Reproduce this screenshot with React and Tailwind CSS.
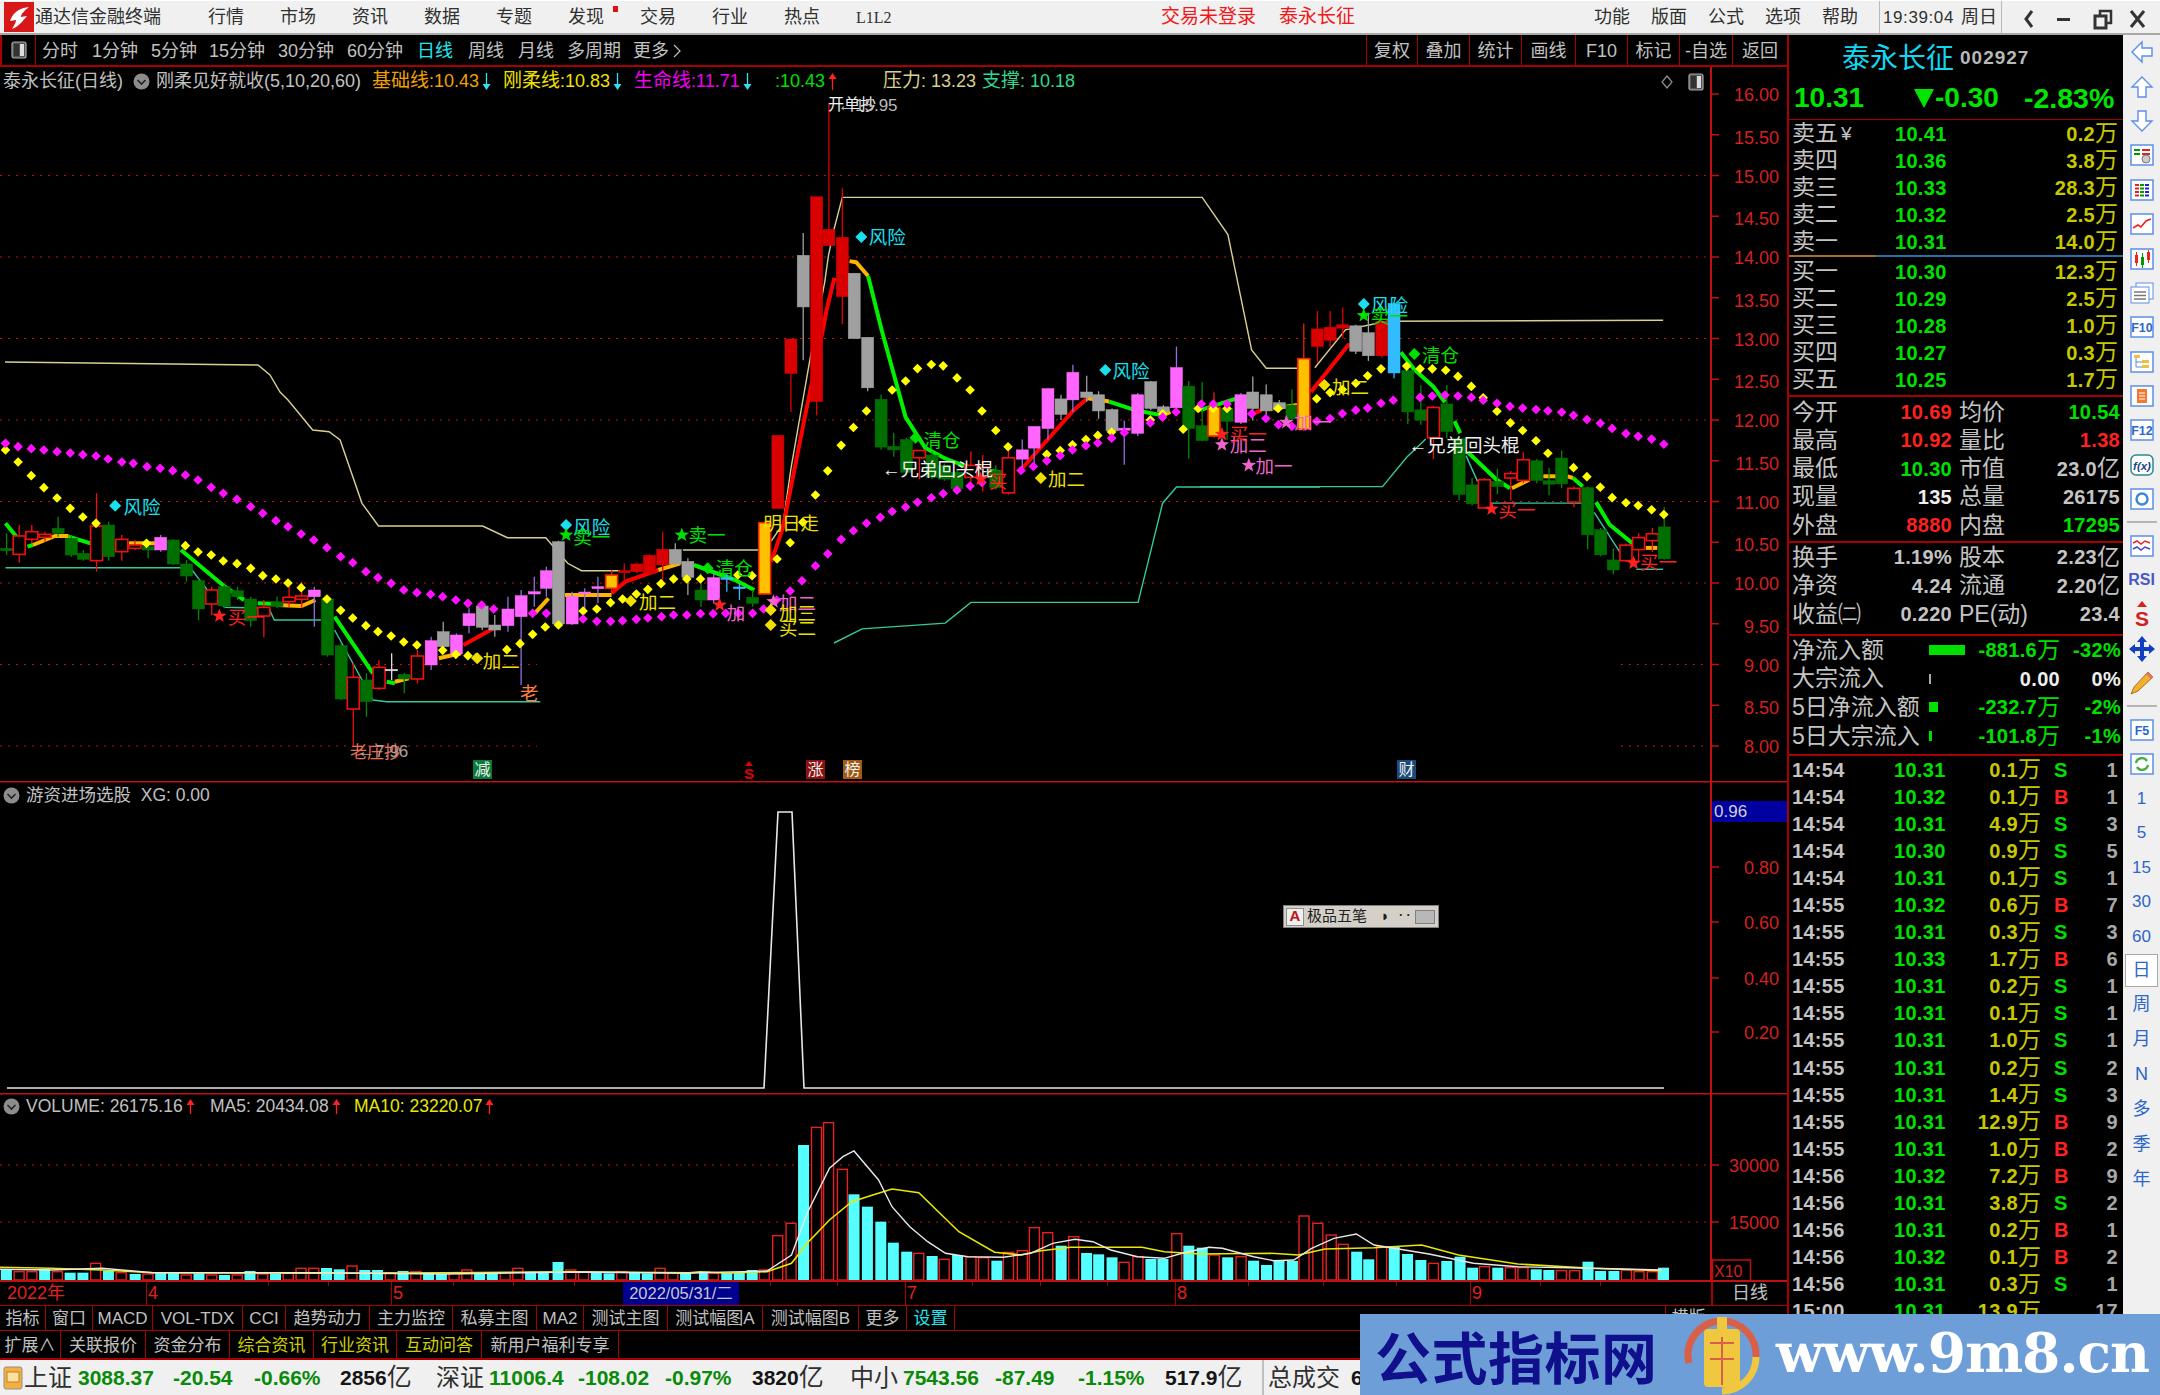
import React from "react";

const z7 = (x, y) => [x / 1.823, 400 + y / 3];
const z8 = (x, y) => [700 + x / 2.529, 90 + y / 2.904];
const z9 = (x, y) => [1200 + x / 2.613, 280 + y / 2.904];
const pts = (f, a) => a.map(([x, y]) => f(x, y));
const P = (arr) => arr.map((p) => p[0].toFixed(1) + "," + p[1].toFixed(1)).join(" ");

const c7 = [
  [12, 445, 452, 400, 465, "g"], [35, 408, 463, 375, 488, "r"], [58, 395, 418, 375, 430, "r"], [82, 403, 412, 395, 425, "r"],
  [106, 385, 400, 350, 410, "g"], [130, 415, 465, 405, 470, "g"], [152, 460, 478, 450, 482, "g"], [176, 378, 482, 280, 515, "r"],
  [198, 375, 470, 365, 482, "g"], [222, 418, 455, 405, 482, "r"], [246, 435, 445, 420, 450, "r"], [270, 440, 450, 420, 475, "g"],
  [293, 412, 450, 405, 455, "p"], [316, 420, 492, 418, 495, "g"], [340, 492, 528, 480, 545, "g"], [362, 542, 627, 535, 660, "g"],
  [386, 570, 612, 560, 645, "r"], [409, 560, 618, 555, 625, "g"], [433, 572, 590, 560, 600, "g"], [457, 597, 662, 590, 680, "g"],
  [481, 622, 648, 600, 712, "r"], [505, 605, 620, 590, 625, "g"], [527, 592, 605, 545, 620, "r"], [550, 588, 598, 545, 625, "r"],
  [573, 570, 590, 560, 680, "p"], [597, 597, 765, 590, 770, "g"], [622, 737, 897, 730, 900, "g"], [644, 832, 927, 790, 1040, "r"],
  [668, 840, 905, 820, 950, "g"], [691, 802, 865, 780, 870, "r"], [714, 808, 811, 760, 840, "w"], [737, 823, 837, 820, 880, "g"],
  [761, 768, 837, 750, 850, "r"], [786, 722, 795, 710, 810, "p"], [808, 695, 740, 665, 750, "a"], [832, 705, 762, 700, 770, "p"],
  [855, 641, 677, 625, 700, "p"], [879, 618, 682, 605, 690, "a"], [902, 675, 690, 645, 710, "a"], [926, 627, 677, 590, 695, "p"],
  [950, 587, 650, 570, 855, "p"], [974, 575, 582, 530, 620, "p"], [996, 512, 565, 500, 590, "p"], [1018, 425, 672, 422, 675, "a"],
  [1043, 590, 672, 575, 675, "p"], [1066, 576, 580, 565, 640, "p"], [1090, 560, 566, 530, 610, "p"], [1115, 525, 565, 510, 575, "o"],
  [1138, 512, 518, 490, 545, "R"], [1161, 492, 515, 488, 520, "R"], [1184, 466, 520, 462, 525, "R"], [1208, 448, 495, 395, 550, "R"],
  [1231, 448, 492, 430, 495, "a"], [1254, 484, 532, 475, 585, "a"], [1278, 570, 600, 520, 620, "g"], [1301, 533, 600, 520, 610, "p"],
  [1325, 533, 538, 520, 575, "c"], [1348, 561, 566, 550, 600, "c"], [1372, 592, 610, 570, 620, "g"], [1394, 368, 582, 365, 585, "o"],
].map(([x, t, b, wt, wb, k]) => ({ x: x / 1.823, t: 400 + t / 3, b: 400 + b / 3, wt: 400 + wt / 3, wb: 400 + wb / 3, k }));

const c8 = [
  [197, 1003, 1215, 1003, 1215, "R"], [230, 723, 823, 723, 935, "R"], [261, 480, 630, 415, 785, "a"], [295, 310, 905, 310, 945, "R"],
  [326, 405, 452, 40, 452, "R"], [360, 428, 600, 285, 680, "R"], [390, 532, 722, 532, 722, "a"], [424, 718, 865, 718, 875, "a"],
  [458, 898, 1037, 885, 1045, "g"], [490, 1035, 1045, 995, 1065, "g"], [522, 1015, 1110, 1010, 1115, "g"], [555, 1047, 1068, 1047, 1130, "r"],
  [587, 1060, 1125, 1050, 1130, "g"], [618, 1090, 1130, 1085, 1135, "g"], [650, 1110, 1158, 1100, 1160, "g"], [685, 1090, 1125, 1050, 1165, "r"],
  [715, 1095, 1125, 1060, 1165, "r"], [748, 1105, 1155, 1090, 1160, "g"], [780, 1068, 1170, 1045, 1175, "r"], [815, 1045, 1072, 1015, 1100, "p"],
  [845, 977, 1040, 977, 1085, "p"], [880, 867, 983, 867, 1015, "p"], [913, 897, 942, 885, 958, "a"], [943, 820, 900, 798, 935, "p"],
  [978, 877, 893, 830, 905, "a"], [1008, 885, 932, 875, 955, "a"], [1042, 928, 990, 925, 1000, "a"], [1073, 982, 988, 960, 1088, "p"],
  [1107, 885, 997, 880, 1005, "p"], [1140, 847, 925, 845, 930, "a"], [1172, 920, 935, 915, 950, "a"], [1205, 806, 923, 745, 935, "p"],
  [1236, 860, 983, 845, 1070, "g"], [1270, 975, 1018, 848, 1020, "g"], [1300, 922, 1005, 878, 1010, "o"], [1333, 925, 962, 920, 1015, "g"],
  [1368, 885, 965, 880, 970, "p"], [1398, 877, 925, 832, 960, "a"], [1432, 885, 932, 855, 950, "a"], [1465, 908, 925, 900, 935, "a"],
  [1497, 915, 955, 870, 960, "g"], [1527, 780, 985, 678, 990, "o"],
].map(([x, t, b, wt, wb, k]) => ({ x: 700 + x / 2.529, t: 90 + t / 2.904, b: 90 + b / 2.904, wt: 90 + wt / 2.904, wb: 90 + wb / 2.904, k }));

const c9 = [
  [307, 142, 193, 90, 240, "R"], [340, 137, 175, 90, 195, "R"], [373, 130, 140, 80, 170, "R"], [407, 133, 207, 130, 215, "a"],
  [440, 153, 220, 95, 235, "a"], [475, 120, 220, 115, 225, "R"], [507, 68, 270, 68, 285, "c"], [543, 263, 383, 245, 418, "g"],
  [577, 377, 407, 305, 420, "g"], [610, 370, 458, 365, 520, "r"], [645, 360, 440, 305, 460, "g"], [677, 460, 623, 455, 640, "g"],
  [711, 595, 650, 575, 655, "g"], [743, 580, 662, 575, 665, "r"], [777, 585, 600, 548, 622, "g"], [812, 562, 575, 555, 640, "r"],
  [845, 522, 582, 500, 590, "r"], [880, 525, 582, 520, 590, "g"], [912, 583, 593, 545, 625, "g"], [945, 517, 592, 495, 605, "g"],
  [977, 605, 645, 600, 660, "r"], [1013, 603, 740, 600, 782, "g"], [1047, 725, 798, 720, 802, "g"], [1080, 813, 842, 780, 855, "g"],
  [1113, 770, 815, 765, 820, "r"], [1146, 748, 783, 735, 820, "r"], [1182, 737, 757, 720, 790, "r"], [1213, 717, 810, 660, 812, "g"],
].map(([x, t, b, wt, wb, k]) => ({ x: 1200 + x / 2.613, t: 280 + t / 2.904, b: 280 + b / 2.904, wt: 280 + wt / 2.904, wb: 280 + wb / 2.904, k }));

const candles = [...c7, ...c8, ...c9];
const STY = {
  g: { fill: "#006f00", stroke: "#006f00", w: "#008a00" },
  r: { fill: "#000", stroke: "#f01010", w: "#f01010" },
  R: { fill: "#d80000", stroke: "#d80000", w: "#e00000" },
  a: { fill: "#a0a0a0", stroke: "#a0a0a0", w: "#a0a0a0" },
  p: { fill: "#ff66ff", stroke: "#ff66ff", w: "#9070e0" },
  o: { fill: "#ffc000", stroke: "#f02000", w: "#f02000" },
  c: { fill: "#33bbff", stroke: "#33bbff", w: "#33bbff" },
  w: { fill: "#ddd", stroke: "#ddd", w: "#ddd" },
};

const yellow = [
  ...pts(z7, [[10, 150], [33, 186], [57, 227], [80, 263], [104, 294], [128, 325], [151, 351], [175, 370], [267, 430], [338, 437], [361, 456], [385, 465], [407, 483], [432, 491], [457, 505], [479, 527], [503, 537], [525, 549], [549, 563], [596, 597], [621, 631], [643, 654], [667, 677], [689, 695], [713, 708], [736, 726], [760, 735], [807, 751], [831, 763], [853, 767], [868, 773], [924, 749], [948, 731], [971, 703], [994, 681], [1018, 675], [1063, 633], [1088, 627], [1113, 608], [1135, 597], [1160, 582], [1181, 568], [1205, 551], [1228, 537], [1252, 537], [1277, 537], [1345, 525], [1371, 527]]),
  ...pts(z8, [[195, 1362], [228, 1315], [260, 1255], [292, 1176], [323, 1106], [357, 1032], [388, 980], [421, 932], [486, 871], [520, 845], [550, 809], [585, 797], [615, 801], [650, 836], [683, 871], [713, 932], [748, 989], [779, 1036], [877, 1058], [911, 1047], [942, 1030], [976, 1015], [1006, 1003], [1041, 993], [1139, 958], [1170, 940], [1222, 985], [1260, 925], [1298, 925], [1333, 925], [1462, 925]]),
  ...pts(z9, [[305, 345], [340, 327], [372, 318], [407, 300], [438, 278], [473, 258], [540, 250], [575, 258], [607, 258], [642, 262], [674, 280], [709, 309], [740, 342], [776, 381], [811, 415], [843, 437], [878, 467], [909, 503], [976, 545], [1011, 571], [1046, 602], [1077, 632], [1113, 647], [1145, 655], [1180, 667], [1212, 681]]),
];
const magenta = [
  ...pts(z7, [[10, 130], [33, 140], [57, 146], [80, 150], [104, 155], [128, 159], [151, 164], [175, 168], [197, 177], [222, 186], [243, 190], [268, 200], [292, 205], [315, 212], [338, 225], [361, 240], [385, 262], [407, 280], [432, 298], [457, 320], [479, 340], [503, 362], [525, 380], [549, 402], [572, 420], [596, 443], [621, 470], [643, 488], [667, 515], [689, 533], [713, 550], [736, 570], [760, 578], [785, 583], [807, 590], [831, 600], [853, 610], [878, 615], [900, 627], [971, 640], [996, 640], [1063, 657], [1088, 664], [1113, 664], [1135, 662], [1160, 658], [1181, 654], [1206, 650], [1228, 645], [1252, 645], [1277, 641], [1300, 641], [1323, 640], [1346, 640], [1372, 640], [1392, 627], [1416, 600]]),
  ...pts(z8, [[228, 1455], [258, 1425], [292, 1382], [323, 1347], [357, 1305], [388, 1280], [421, 1258], [456, 1241], [486, 1224], [520, 1211], [550, 1197], [585, 1184], [615, 1172], [650, 1162], [683, 1150], [713, 1140], [812, 1105], [843, 1093], [877, 1077], [911, 1062], [942, 1045], [976, 1033], [1006, 1025], [1041, 1011], [1073, 995], [1139, 967], [1170, 950], [1204, 935], [1268, 912], [1298, 912], [1333, 912], [1395, 940]]),
  ...pts(z9, [[172, 402], [205, 420], [240, 425], [305, 410], [340, 402], [372, 388], [407, 378], [438, 372], [473, 358], [505, 349], [575, 341], [607, 337], [640, 334], [674, 337], [709, 341], [740, 349], [776, 358], [810, 367], [843, 372], [878, 376], [909, 380], [945, 384], [976, 393], [1011, 405], [1046, 416], [1077, 431], [1113, 446], [1145, 454], [1180, 462], [1212, 477]]),
];

const GRN = "#00f000", RED = "#ff0000", ORG = "#ffb400";
const thick = [
  [z7, GRN, [[10, 370], [30, 410]]], [z7, GRN, [[50, 440], [60, 435]]], [z7, ORG, [[60, 435], [100, 408], [125, 408]]], [z7, GRN, [[125, 410], [165, 430]]],
  [z7, ORG, [[235, 430], [285, 430]]], [z7, GRN, [[330, 450], [410, 560], [445, 600]]], [z7, GRN, [[470, 610], [505, 612]]], [z7, ORG, [[505, 615], [550, 618], [575, 600]]],
  [z7, GRN, [[610, 650], [680, 820]]], [z7, GRN, [[705, 845], [720, 850]]], [z7, ORG, [[720, 845], [745, 835]]], [z7, ORG, [[800, 775], [840, 760]]],
  [z7, RED, [[845, 735], [900, 685]]], [z7, ORG, [[975, 640], [1000, 595]]], [z7, ORG, [[1030, 585], [1115, 585]]], [z7, RED, [[1115, 580], [1140, 545], [1200, 510]]],
  [z7, ORG, [[1200, 510], [1240, 490]]], [z7, GRN, [[1265, 495], [1340, 540], [1375, 570]]],
  [z8, RED, [[180, 1370], [210, 1270], [265, 950], [310, 700], [320, 640], [340, 545]]],
  [z8, ORG, [[378, 497], [395, 500], [425, 540]]],
  [z8, GRN, [[425, 540], [460, 700], [520, 950], [570, 1040], [620, 1070], [690, 1100], [760, 1110]]],
  [z8, RED, [[810, 1105], [945, 930], [980, 895]]], [z8, ORG, [[980, 895], [1035, 905]]], [z8, GRN, [[1035, 905], [1100, 930], [1170, 945]]],
  [z8, ORG, [[1170, 945], [1190, 935]]], [z8, GRN, [[1265, 930], [1360, 895]]], [z8, RED, [[1390, 945], [1420, 930]]], [z8, ORG, [[1450, 925], [1510, 915]]],
  [z9, RED, [[290, 325], [390, 185]]], [z9, GRN, [[525, 210], [560, 260], [610, 310], [640, 355]]], [z9, GRN, [[665, 410], [680, 445]]], [z9, GRN, [[700, 500], [775, 580], [810, 605]]],
  [z9, ORG, [[815, 605], [860, 580]]], [z9, ORG, [[897, 570], [930, 570]]], [z9, ORG, [[960, 570], [975, 575]]], [z9, GRN, [[975, 575], [1000, 600]]], [z9, GRN, [[1035, 645], [1070, 710], [1130, 765]]],
  [z9, ORG, [[1165, 778], [1195, 778]]],
];
const beige = [
  [[5, 362], [258, 365], [270, 375], [280, 392]].concat(pts(z7, [[525, 0], [570, 90], [600, 95], [620, 120], [660, 310], [690, 378], [880, 378], [925, 413], [995, 413], [1035, 490], [1060, 512], [1130, 512]])),
  pts(z7, [[1245, 450], [1385, 450]]),
  pts(z8, [[180, 1310], [210, 1260], [230, 1100], [280, 770], [315, 560], [325, 480], [340, 400], [360, 312], [1270, 312], [1335, 420], [1395, 755], [1432, 808], [1540, 808]]),
  pts(z9, [[300, 255], [380, 145], [490, 120], [1210, 117]]),
];
const teal = [
  pts(z7, [[10, 503], [330, 503]]), pts(z7, [[350, 510], [385, 585], [410, 622], [490, 625], [500, 660], [585, 660]]), pts(z7, [[610, 690], [640, 780], [680, 900], [705, 905], [985, 905]]),
  [[834, 643]].concat(pts(z8, [[410, 1565], [620, 1548], [685, 1488], [1108, 1488], [1170, 1200], [1205, 1153], [1568, 1153]])),
  pts(z9, [[0, 600], [477, 600], [540, 515], [590, 462]]), pts(z9, [[695, 510], [725, 585]]), pts(z9, [[760, 648], [1000, 648]]), pts(z9, [[1030, 675], [1100, 795]]), pts(z9, [[1140, 840], [1210, 840]]),
];

const CY = "#19e0f0", YE = "#f0e000", GR = "#00e000", RE = "#ff2020", PK = "#ee66cc";
const marks = [
  [z7, "d", CY, 210, 317, "风险", 225, 320], [z7, "d", CY, 1032, 375, "风险", 1045, 380], [z7, "s", GR, 1032, 405, "卖一", 1045, 410],
  [z7, "s", RE, 400, 648, "买一", 415, 652], [z7, "d", YE, 870, 775, "加二", 880, 782], [z7, null, "", 0, 0, "老", 948, 880, "#ff8040"],
  [z7, "s", GR, 1243, 405, "卖一", 1255, 405], [z7, "d", GR, 1290, 505, "清仓", 1305, 505], [z7, "d", YE, 1150, 603, "加二", 1165, 605],
  [z7, "s", RE, 1312, 615, "加", 1325, 640, PK], [z7, "s", PK, 1410, 605, "加二", 1420, 610], [z7, "d", YE, 1405, 630, "加三", 1420, 640], [z7, "d", YE, 1405, 675, "买二", 1420, 685],
  [z7, null, "", 0, 0, "明日走", 1392, 368, YE],
  [z8, "d", CY, 408, 427, "风险", 427, 428], [z8, "d", GR, 545, 1010, "清仓", 565, 1015], [z8, null, "", 0, 0, "←兄弟回头棍", 460, 1100, "#f0f0f0"],
  [z8, "s", RE, 710, 1130, "买", 730, 1135], [z8, "d", YE, 862, 1127, "加二", 880, 1130], [z8, "d", CY, 1025, 813, "风险", 1043, 815],
  [z8, "s", PK, 1388, 1090, "加一", 1405, 1092], [z8, "s", PK, 1320, 1030, "加二", 1340, 1030], [z8, "s", RE, 1320, 1000, "买一", 1340, 998], [z8, "s", PK, 1483, 965, "加一", 1503, 965],
  [z9, "d", CY, 428, 70, "风险", 447, 72], [z9, "s", GR, 428, 103, "卖一", 447, 105], [z9, "d", YE, 325, 305, "加二", 345, 310], [z9, "d", GR, 560, 215, "清仓", 580, 218],
  [z9, null, "", 0, 0, "←兄弟回头棍", 545, 478, "#f0f0f0"], [z9, "s", RE, 762, 665, "买一", 780, 668], [z9, "s", RE, 1133, 822, "买一", 1150, 820],
];

const axisP = ["16.00", "15.50", "15.00", "14.50", "14.00", "13.50", "13.00", "12.50", "12.00", "11.50", "11.00", "10.50", "10.00", "9.50", "9.00", "8.50", "8.00"];
const Y = (p) => 746 - (p - 8) * 81.5;

function starPoints(cx, cy, r) {
  const a = [];
  for (let i = 0; i < 10; i++) {
    const R = i % 2 ? r * 0.42 : r;
    const t = -Math.PI / 2 + (i * Math.PI) / 5;
    a.push((cx + R * Math.cos(t)).toFixed(1) + "," + (cy + R * Math.sin(t)).toFixed(1));
  }
  return a.join(" ");
}
const Diamond = ({ x, y, r = 4.8, fill }) => <polygon points={`${x},${y - r} ${x + r},${y} ${x},${y + r} ${x - r},${y}`} fill={fill} />;

function MainChart() {
  return (
    <svg width="1787" height="685" viewBox="0 96 1787 685" className="block overflow-visible">
      {[15, 14, 13, 12, 11, 10].map((p) => (
        <line key={p} x1="0" x2="1709" y1={Y(p)} y2={Y(p)} stroke="#c81010" strokeWidth="1" strokeDasharray="2 6" />
      ))}
      {[9, 8].map((p) => (
        <g key={p}>
          <line x1="0" x2="537" y1={Y(p)} y2={Y(p)} stroke="#c81010" strokeDasharray="2 6" />
          <line x1="1621" x2="1709" y1={Y(p)} y2={Y(p)} stroke="#c81010" strokeDasharray="2 6" />
        </g>
      ))}
      <line x1="1711" x2="1711" y1="67" y2="781" stroke="#c01010" strokeWidth="2" />
      {axisP.map((s) => {
        const v = parseFloat(s);
        const y = Y(v);
        const half = v % 1 !== 0;
        return (
          <g key={s}>
            <line x1="1711" x2="1719" y1={y} y2={y} stroke="#c01010" strokeWidth="1.5" />
            <text x="1779" y={y + (half ? 9 : 7)} textAnchor="end" fontSize="18" fill="#d42020">{s}</text>
          </g>
        );
      })}
      {beige.map((a, i) => <polyline key={i} points={P(a)} fill="none" stroke="#d8d090" strokeWidth="1.4" />)}
      {teal.map((a, i) => <polyline key={i} points={P(a)} fill="none" stroke="#35c8a0" strokeWidth="1.4" />)}
      {thick.map(([f, col, a], i) => <polyline key={i} points={P(pts(f, a))} fill="none" stroke={col} strokeWidth="4" strokeLinejoin="round" />)}
      {candles.map((c, i) => {
        const s = STY[c.k];
        return (
          <g key={i}>
            <line x1={c.x} x2={c.x} y1={c.wt} y2={c.wb} stroke={s.w} strokeWidth="1.3" />
            <rect x={c.x - 6} y={c.t} width="12" height={Math.max(c.b - c.t, 1.5)} fill={s.fill} stroke={s.stroke} strokeWidth={c.k === "r" || c.k === "o" ? 1.6 : 0.5} />
          </g>
        );
      })}
      {yellow.map((p, i) => <Diamond key={i} x={p[0]} y={p[1]} fill="#ffff00" />)}
      {magenta.map((p, i) => <Diamond key={i} x={p[0]} y={p[1]} fill="#ff10ff" />)}
      {marks.map(([f, k, col, mx, my, t, tx, ty, tc], i) => {
        const m = f(mx, my), q = f(tx, ty);
        return (
          <g key={i}>
            {k === "d" && <Diamond x={m[0]} y={m[1]} r={6} fill={col} />}
            {k === "s" && <polygon points={starPoints(m[0], m[1], 7.5)} fill={col} />}
            <text x={q[0]} y={q[1] + 7} fontSize="18.5" fill={tc || col}>{t}</text>
          </g>
        );
      })}
      <text x="828" y="110" fontSize="16" fill="#f0f0f0">开单抄</text>
      <text x="838" y="111" fontSize="17" fill="#bbb">←15.95</text>
      <text x="350" y="758" fontSize="17" fill="#e87050">老庄抄</text>
      <text x="358" y="757" fontSize="17" fill="#b0a0a0">←7.96</text>
      <rect x="473" y="760" width="19" height="19" fill="#0a7a3a" />
      <text x="482.5" y="775" textAnchor="middle" fontSize="16" fill="#f0f0f0">减</text>
      <polygon points="749,761 753,766 745,766" fill="#e00000" />
      <text x="749" y="779" textAnchor="middle" fontSize="15" fill="#e00000" fontWeight="700">S</text>
      <rect x="806" y="760" width="19" height="19" fill="#8c1010" />
      <text x="815.5" y="775" textAnchor="middle" fontSize="16" fill="#f0f0f0">涨</text>
      <rect x="843" y="760" width="19" height="19" fill="#a05a14" />
      <text x="852.5" y="775" textAnchor="middle" fontSize="16" fill="#f0f0f0">榜</text>
      <rect x="1397" y="760" width="19" height="19" fill="#1a4a7a" />
      <text x="1406.5" y="775" textAnchor="middle" fontSize="16" fill="#f0f0f0">财</text>
    </svg>
  );
}

function XGChart() {
  return (
    <svg width="1787" height="312" viewBox="0 781 1787 312" className="block">
      <line x1="0" x2="1787" y1="781.5" y2="781.5" stroke="#c01010" strokeWidth="2" />
      <line x1="1711" x2="1711" y1="781" y2="1093" stroke="#c01010" strokeWidth="2" />
      <polyline points="7,1088 764,1088 778,812 792,812 804,1088 1664,1088" fill="none" stroke="#e8e8e8" strokeWidth="1.6" />
      {[[0.8, 867], [0.6, 922], [0.4, 978], [0.2, 1032]].map(([v, y]) => (
        <g key={v}>
          <line x1="1711" x2="1719" y1={y} y2={y} stroke="#c01010" strokeWidth="1.5" />
          <text x="1779" y={y + 7} textAnchor="end" fontSize="18" fill="#d42020">{v.toFixed(2)}</text>
        </g>
      ))}
      <rect x="1712" y="801" width="75" height="21" fill="#0000a0" />
      <text x="1714" y="817" fontSize="17" fill="#d0d0d0">0.96</text>
    </svg>
  );
}

const v5 = [[10,"c",28],[30,"r",35],[50,"r",35],[70,"c",26],[90,"r",35],[110,"c",38],[130,"c",38],[150,"r",10],[170,"c",33],[190,"r",38],[212,"c",42],[232,"r",42],[252,"c",38],[272,"c",38],[292,"r",45],[312,"c",40],[332,"r",45],[352,"c",45],[372,"r",45],[392,"c",33],[412,"r",42],[432,"c",42],[452,"r",40],[472,"r",25],[492,"r",25],[512,"c",24],[532,"c",28],[552,"r",18],[572,"c",30],[592,"c",30],[612,"r",38],[632,"c",33],[652,"r",35],[672,"c",38],[692,"c",42],[712,"r",38],[732,"r",30],[752,"c",38],[772,"c",40],[792,"r",38],[812,"r",25],[832,"c",35],[852,"c",35],[875,"c",6],[895,"r",30],[915,"r",35],[935,"c",38],[955,"c",40],[975,"r",35],[995,"c",38],[1015,"c",40],[1035,"r",25],[1055,"r",38],[1075,"c",38]];
const v10 = [[10,"c",545],[30,"r",550],[60,"c",548],[88,"c",548],[117,"c",540],[144,"r",540],[174,"r",437],[204,"r",400],[232,"c",165],[261,"r",112],[288,"r",98],[319,"r",238],[345,"c",313],[375,"c",350],[405,"c",395],[433,"c",458],[463,"c",485],[490,"r",490],[520,"c",498],[547,"r",508],[577,"c",495],[607,"r",500],[635,"r",503],[665,"c",512],[691,"r",487],[722,"r",482],[749,"r",413],[779,"r",428],[809,"c",467],[837,"r",440],[866,"c",489],[893,"c",493],[923,"c",502],[950,"r",517],[981,"r",500],[1010,"c",507],[1037,"c",507],[1068,"r",431],[1095,"c",467],[1125,"c",473],[1152,"r",495],[1182,"c",502],[1212,"r",500],[1240,"c",512],[1269,"c",525],[1297,"c",513],[1327,"c",513],[1353,"r",378],[1384,"r",400],[1414,"r",435],[1441,"r",463],[1471,"c",485],[1498,"c",508]];
const v6 = [[516,"r",440],[533,"c",440],[551,"c",462],[569,"c",480],[586,"r",490],[604,"c",483],[622,"c",470],[639,"c",503],[655,"r",500],[673,"c",503],[690,"r",503],[707,"r",503],[725,"c",508],[742,"c",510],[759,"r",512],[777,"r",512],[795,"c",485],[812,"c",513],[830,"c",513],[847,"r",510],[864,"r",515],[882,"r",515],[897,"c",503]];
const vols = [
  ...v5.map(([x, k, t]) => ({ x: x / 1.568, k, y: 1260 + t / 3 })),
  ...v10.map(([x, k, t]) => ({ x: 700 + x / 2.24, k, y: 1090 + t / 3 })),
  ...v6.map(([x, k, t]) => ({ x: 1000 + x / 1.352, k, y: 1100 + t / 3 })),
];
const s5 = (x, y) => [x / 1.568, 1260 + y / 3];
const s10 = (x, y) => [700 + x / 2.24, 1090 + y / 3];
const s6 = (x, y) => [1000 + x / 1.352, 1100 + y / 3];
const maW = [...pts(s5, [[0, 28], [80, 30], [160, 25], [240, 38], [500, 38], [700, 42], [900, 36], [1080, 40]]), ...pts(s10, [[0, 548], [150, 543], [205, 495], [240, 370], [290, 235], [320, 200], [345, 183], [400, 270], [430, 350], [470, 410], [510, 455], [550, 490], [600, 500], [680, 502], [740, 490], [790, 460], [840, 448], [880, 455], [920, 480], [980, 500], [1040, 505], [1080, 490], [1140, 472], [1170, 475], [1240, 500], [1285, 512], [1330, 510], [1370, 475], [1420, 445], [1470, 432], [1510, 465]]), ...pts(s6, [[580, 462], [640, 490], [700, 500], [800, 505], [895, 510]])];
const maY = [...pts(s5, [[0, 22], [80, 25], [160, 30], [240, 38], [500, 40], [700, 38], [900, 35], [1080, 38]]), ...pts(s10, [[0, 545], [60, 550], [150, 545], [205, 520], [240, 460], [290, 390], [340, 335], [380, 318], [430, 297], [490, 308], [580, 425], [660, 487], [720, 495], [760, 483], [830, 472], [990, 472], [1040, 485], [1120, 492], [1280, 490], [1340, 495], [1400, 477], [1510, 473]]), ...pts(s6, [[570, 435], [620, 465], [700, 492], [800, 505], [895, 512]])];

function VolChart() {
  return (
    <svg width="1787" height="189" viewBox="0 1093 1787 189" className="block">
      <line x1="0" x2="1787" y1="1093.5" y2="1093.5" stroke="#c01010" strokeWidth="2" />
      <line x1="1711" x2="1711" y1="1093" y2="1282" stroke="#c01010" strokeWidth="2" />
      {[1165, 1222].map((y) => (
        <g key={y}>
          <line x1="0" x2="1709" y1={y} y2={y} stroke="#c81010" strokeDasharray="2 6" />
          <line x1="1711" x2="1719" y1={y} y2={y} stroke="#c01010" strokeWidth="1.5" />
        </g>
      ))}
      <text x="1779" y="1172" textAnchor="end" fontSize="18" fill="#d42020">30000</text>
      <text x="1779" y="1229" textAnchor="end" fontSize="18" fill="#d42020">15000</text>
      <rect x="1712.5" y="1260" width="38" height="21" fill="none" stroke="#c01010" strokeWidth="1.5" />
      <text x="1714" y="1277" fontSize="16" fill="#d42020">X10</text>
      {vols.map((v, i) =>
        v.k === "c" ? (
          <rect key={i} x={v.x - 5.5} y={v.y} width="11" height={Math.max(1280 - v.y, 1)} fill="#55ffff" />
        ) : (
          <rect key={i} x={v.x - 5} y={v.y} width="10" height={Math.max(1280 - v.y, 1)} fill="#000" stroke="#e82020" strokeWidth="1.4" />
        )
      )}
      <polyline points={P(maY)} fill="none" stroke="#e8e800" strokeWidth="1.6" />
      <polyline points={P(maW)} fill="none" stroke="#e8e8e8" strokeWidth="1.4" />
      <line x1="0" x2="1787" y1="1281" y2="1281" stroke="#c01010" strokeWidth="2" />
    </svg>
  );
}

const Caret = () => (
  <svg width="17" height="17" viewBox="0 0 17 17" className="shrink-0">
    <circle cx="8.5" cy="8.5" r="8" fill="#8c8c8c" />
    <path d="M4.5 7 L8.5 11 L12.5 7" fill="none" stroke="#222" strokeWidth="1.6" />
  </svg>
);
const BoxIcon = () => (
  <svg width="16" height="18" viewBox="0 0 16 18" className="shrink-0">
    <rect x="1" y="1" width="14" height="16" rx="2" fill="#555" stroke="#aaa" strokeWidth="1.2" />
    <rect x="9" y="3" width="4" height="12" fill="#ddd" />
    <rect x="3" y="3" width="5" height="12" fill="#333" />
  </svg>
);
const Arr = ({ c = "#ff2020", down = false, h = 17 }) => (
  <svg width="9" height={h} viewBox={`0 0 9 ${h}`} className="ml-[3px] inline-block shrink-0 align-[-3px]">
    {down ? (
      <g><line x1="4.5" x2="4.5" y1="0" y2={h - 5} stroke={c} strokeWidth="1.3" /><polygon points={`0.5,${h - 6} 8.5,${h - 6} 4.5,${h}`} fill={c} /></g>
    ) : (
      <g><line x1="4.5" x2="4.5" y1="5" y2={h} stroke={c} strokeWidth="1.3" /><polygon points="0.5,6 8.5,6 4.5,0" fill={c} /></g>
    )}
  </svg>
);

const topMenu = ["行情", "市场", "资讯", "数据", "专题", "发现", "交易", "行业", "热点", "L1L2"];
const rTop = ["功能", "版面", "公式", "选项", "帮助"];

function TopBar() {
  return (
    <div className="flex h-[35px] shrink-0 items-center border-t border-b-2 border-t-white border-b-[#a8a8a8] bg-[#f0f0f0] text-[18px] text-[#303030]">
      <svg width="30" height="30" viewBox="0 0 30 30" className="ml-[4px] shrink-0">
        <rect width="30" height="30" fill="#d81818" />
        <path d="M6 19 C10 8 18 6 25 5 C20 9 17 12 17 15 L23 14 C18 20 14 25 8 27 C11 22 12 20 12 18 Z" fill="#fff" />
      </svg>
      <span className="ml-[1px] w-[173px] shrink-0 pt-[1px]">通达信金融终端</span>
      {topMenu.map((m) => (
        <span key={m} className={"relative w-[72px] shrink-0 pt-[1px]" + (m === "L1L2" ? " text-[16px] font-['Liberation_Serif',serif]" : "")}>
          {m}
          {m === "发现" && <span className="absolute left-[45px] top-[3px] h-[6px] w-[5px] bg-[#e01010]" />}
        </span>
      ))}
      <span className="ml-[233px] w-[118px] shrink-0 pt-[1px] text-[19px] text-[#f01818]">交易未登录</span>
      <span className="w-[315px] shrink-0 pt-[1px] text-[19px] text-[#f01818]">泰永长征</span>
      {rTop.map((t) => <span key={t} className="w-[57px] shrink-0 pt-[1px]">{t}</span>)}
      <span className="flex h-full w-[123px] shrink-0 items-center border-l border-r border-[#b8b8b8] pt-[1px] text-[17px]">
        <span className="ml-[3px] w-[78px] tracking-[0.6px]">19:39:04</span><span className="text-[18px]">周日</span>
      </span>
      <svg width="150" height="33" viewBox="0 0 150 33" className="shrink-0">
        <path d="M30 10 L24 18 L30 26" fill="none" stroke="#333" strokeWidth="3" />
        <rect x="55" y="17" width="13" height="3" fill="#333" />
        <rect x="93" y="15" width="11" height="12" fill="none" stroke="#333" strokeWidth="3" />
        <path d="M98 14 V10 H109 V22 H105" fill="none" stroke="#333" strokeWidth="2.5" />
        <path d="M129 10 L142 26 M142 10 L129 26" stroke="#333" strokeWidth="3" />
      </svg>
    </div>
  );
}

const tb = [["分时", 50], ["1分钟", 59], ["5分钟", 58], ["15分钟", 69], ["30分钟", 69], ["60分钟", 70], ["日线", 51, 1], ["周线", 50], ["月线", 49], ["多周期", 66]];
const tbR = [["复权", 51], ["叠加", 52], ["统计", 52], ["画线", 54], ["F10", 52], ["标记", 52], ["-自选", 53], ["返回", 55]];

function Toolbar() {
  return (
    <div className="flex h-[32px] shrink-0 items-stretch border-b-2 border-[#a80000] bg-black text-[18px] text-[#c0c0c0]">
      <div className="flex w-[36px] shrink-0 items-center justify-center border-l-2 border-r border-[#a80000]"><BoxIcon /></div>
      <div className="ml-[6px] flex items-center pt-[2px]">
        {tb.map(([t, w, c]) => <span key={t} style={{ width: w }} className={"shrink-0 " + (c ? "text-[#20e8f0]" : "")}>{t}</span>)}
        <span className="shrink-0">更多</span>
        <svg width="10" height="16" viewBox="0 0 10 16" className="ml-[3px]"><path d="M2 2 L8 8 L2 14" fill="none" stroke="#c0c0c0" strokeWidth="1.2" /></svg>
      </div>
      <div className="ml-auto flex">
        {tbR.map(([t, w]) => (
          <span key={t} style={{ width: w }} className="flex items-center justify-center border-l border-[#a80000] pt-[2px]">{t}</span>
        ))}
      </div>
    </div>
  );
}

const Lab = ({ children }) => <span className="text-[19px]">{children}</span>;

function Header() {
  return (
    <div className="flex h-[29px] shrink-0 items-center bg-black text-[18px] text-[#c0c0c0]">
      <span className="ml-[3px] w-[130px] shrink-0 whitespace-nowrap">泰永长征(日线)</span>
      <Caret />
      <span className="ml-[6px] w-[216px] shrink-0 whitespace-nowrap">刚柔见好就收(5,10,20,60)</span>
      <span className="flex w-[131px] shrink-0 items-center whitespace-nowrap text-[#f0a000]"><Lab>基础线</Lab>:10.43<Arr c="#30e0f0" down /></span>
      <span className="flex w-[131px] shrink-0 items-center whitespace-nowrap text-[#f0e000]"><Lab>刚柔线</Lab>:10.83<Arr c="#30e0f0" down /></span>
      <span className="flex w-[141px] shrink-0 items-center whitespace-nowrap text-[#f000f0]"><Lab>生命线</Lab>:11.71<Arr c="#30e0f0" down /></span>
      <span className="flex w-[108px] shrink-0 items-center whitespace-nowrap text-[#00e000]">:10.43<Arr /></span>
      <span className="w-[99px] shrink-0 whitespace-nowrap text-[#d8d090]"><Lab>压力</Lab>: 13.23</span>
      <span className="shrink-0 whitespace-nowrap text-[#30d890]"><Lab>支撑</Lab>: 10.18</span>
      <svg width="12" height="14" viewBox="0 0 12 14" className="ml-auto shrink-0"><path d="M6 1 L11 7 L6 13 L1 7 Z" fill="none" stroke="#909090" strokeWidth="1.2" /></svg>
      <span className="ml-[15px] mr-[83px]"><BoxIcon /></span>
    </div>
  );
}

const Tab = ({ w, c, children }) => (
  <span style={{ width: w }} className={"flex h-full shrink-0 items-center justify-center whitespace-nowrap border-r border-[#a80000] pt-[2px] " + (c || "text-[#c0c0c0]")}>{children}</span>
);
const t1 = [["指标", 46], ["窗口", 47], ["MACD", 60], ["VOL-TDX", 90], ["CCI", 43], ["趋势动力", 84], ["主力监控", 83], ["私募主图", 84], ["MA2", 47], ["测试主图", 84], ["测试幅图A", 95], ["测试幅图B", 96], ["更多", 48], ["设置", 48, "text-[#20e8f0]"]];
const t2 = [["扩展∧", 61], ["关联报价", 85], ["资金分布", 84], ["综合资讯", 84, "text-[#d0d000]"], ["行业资讯", 83, "text-[#d0d000]"], ["互动问答", 85, "text-[#d0d000]"], ["新用户福利专享", 137]];
const ticks = [268, 328, 453, 513, 574, 770, 837, 972, 1040, 1107, 1248, 1323, 1396, 1540, 1600];

function DateRow() {
  const item = (x, t) => (
    <span key={t} style={{ left: x }} className="absolute top-0 flex h-full items-center border-l border-[#a80000] pl-[1px] text-[#e02020]">{t}</span>
  );
  return (
    <div className="relative h-[24px] shrink-0 border-b border-[#a80000] bg-black text-[18px]">
      <span className="absolute left-[7px] top-0 flex h-full items-center text-[#e02020]">2022年</span>
      {ticks.map((x) => <span key={x} style={{ left: x }} className="absolute top-0 h-[4px] w-[1px] bg-[#a80000]" />)}
      {item(146, "4")}{item(391, "5")}{item(905, "7")}{item(1175, "8")}{item(1470, "9")}
      <span className="absolute left-[623px] top-0 flex h-full w-[116px] items-center justify-center bg-[#000090] text-[16.5px] text-[#c8c8c8]">2022/05/31/二</span>
      <span className="absolute left-[1711px] top-0 flex h-full w-[76px] items-center justify-center border-l-2 border-[#a80000] text-[18px] text-[#c0c0c0]">日线</span>
    </div>
  );
}

function Left() {
  return (
    <div className="flex w-[1787px] shrink-0 flex-col bg-black">
      <Toolbar />
      <Header />
      <MainChart />
      <div className="relative h-[312px] shrink-0">
        <XGChart />
        <div className="absolute left-[3px] top-[1px] flex h-[26px] items-center gap-[6px] text-[17.5px] text-[#c0c0c0]"><Caret /><span>游资进场选股&nbsp; XG: 0.00</span></div>
      </div>
      <div className="relative h-[189px] shrink-0">
        <VolChart />
        <div className="absolute left-[3px] top-[1px] flex h-[24px] items-center text-[17.5px] text-[#c0c0c0]">
          <Caret />
          <span className="ml-[6px] flex w-[184px] shrink-0 items-center whitespace-nowrap">VOLUME: 26175.16<Arr h={15} /></span>
          <span className="flex w-[144px] shrink-0 items-center whitespace-nowrap">MA5: 20434.08<Arr h={15} /></span>
          <span className="flex shrink-0 items-center whitespace-nowrap text-[#e8e800]">MA10: 23220.07<Arr h={15} /></span>
        </div>
      </div>
      <DateRow />
      <div className="flex h-[25px] shrink-0 items-center border-b border-[#a80000] text-[17px]">
        {t1.map(([t, w, c]) => <Tab key={t} w={w} c={c}>{t}</Tab>)}
        <span className="ml-[710px] flex h-full w-[46px] items-center justify-center border-l border-[#a80000] text-[#c0c0c0]">横版</span>
      </div>
      <div className="flex h-[27px] shrink-0 items-center text-[17px]">
        {t2.map(([t, w, c]) => <Tab key={t} w={w} c={c}>{t}</Tab>)}
      </div>
    </div>
  );
}

const Num = ({ c, children, cls = "" }) => <span className={"font-bold text-[20px] tracking-[0.3px] " + cls} style={{ color: c }}>{children}</span>;
const LB = "text-[23px] leading-none text-[#c4c4c4]";
const Wan = ({ c = "#c8c800", u = "万" }) => <span style={{ color: c }} className="text-[23px] font-normal leading-none">{u}</span>;

const sells = [["卖五", "10.41", "0.2"], ["卖四", "10.36", "3.8"], ["卖三", "10.33", "28.3"], ["卖二", "10.32", "2.5"], ["卖一", "10.31", "14.0"]];
const buys = [["买一", "10.30", "12.3"], ["买二", "10.29", "2.5"], ["买三", "10.28", "1.0"], ["买四", "10.27", "0.3"], ["买五", "10.25", "1.7"]];
const QuoteRow = ({ r }) => (
  <div className="flex h-[27px] items-center pr-[5px]">
    <span className={LB + " w-[52px] shrink-0 pl-[3px]"}>{r[0]}</span>
    <span className="w-[54px] shrink-0 text-[19px] leading-none text-[#c4c4c4]">{r[0] === "卖五" ? "¥" : ""}</span>
    <Num c="#00e000">{r[1]}</Num>
    <span className="ml-auto flex items-center"><Num c="#c8c800">{r[2]}</Num><Wan /></span>
  </div>
);
const G = "#00e000", RD = "#ff2020", W = "#c4c4c4", WH = "#eeeeee";
const stats = [
  ["今开", "10.69", RD, "均价", "10.54", G], ["最高", "10.92", RD, "量比", "1.38", RD], ["最低", "10.30", G, "市值", "23.0亿", W],
  ["现量", "135", WH, "总量", "26175", W], ["外盘", "8880", RD, "内盘", "17295", G],
];
const stats2 = [["换手", "1.19%", W, "股本", "2.23亿", W], ["净资", "4.24", W, "流通", "2.20亿", W], ["收益㈡", "0.220", W, "PE(动)", "23.4", W]];
const StatRow = ({ r, h }) => {
  const v = (s, c) => s.endsWith("亿") ? <span className="flex items-center"><Num c={c}>{s.slice(0, -1)}</Num><Wan c={c} u="亿" /></span> : <Num c={c}>{s}</Num>;
  return (
    <div style={{ height: h }} className="flex items-center">
      <span className={LB + " w-[118px] shrink-0 whitespace-nowrap pl-[3px]"}>{r[0]}</span>
      <span className="flex w-[45px] shrink-0 justify-end overflow-visible whitespace-nowrap">{v(r[1], r[2])}</span>
      <span className={LB + " ml-[7px] w-[70px] shrink-0 whitespace-nowrap"}>{r[3]}</span>
      <span className="ml-auto flex pr-[3px]">{v(r[4], r[5])}</span>
    </div>
  );
};
const flows = [
  ["净流入额", 36, G, "-881.6", "-32%", G, 10], ["大宗流入", 2, "#aaa", "0.00", "0%", WH, 10], ["5日净流入额", 9, G, "-232.7", "-2%", G, 10], ["5日大宗流入", 3, G, "-101.8", "-1%", G, 10],
];
const trades = [
  ["14:54", "10.31", "0.1", "S", "1"], ["14:54", "10.32", "0.1", "B", "1"], ["14:54", "10.31", "4.9", "S", "3"], ["14:54", "10.30", "0.9", "S", "5"], ["14:54", "10.31", "0.1", "S", "1"],
  ["14:55", "10.32", "0.6", "B", "7"], ["14:55", "10.31", "0.3", "S", "3"], ["14:55", "10.33", "1.7", "B", "6"], ["14:55", "10.31", "0.2", "S", "1"], ["14:55", "10.31", "0.1", "S", "1"],
  ["14:55", "10.31", "1.0", "S", "1"], ["14:55", "10.31", "0.2", "S", "2"], ["14:55", "10.31", "1.4", "S", "3"], ["14:55", "10.31", "12.9", "B", "9"], ["14:55", "10.31", "1.0", "B", "2"],
  ["14:56", "10.32", "7.2", "B", "9"], ["14:56", "10.31", "3.8", "S", "2"], ["14:56", "10.31", "0.2", "B", "1"], ["14:56", "10.32", "0.1", "B", "2"], ["14:56", "10.31", "0.3", "S", "1"],
  ["15:00", "10.31", "13.9", "", "17"],
];

function RightPanel() {
  return (
    <div className="flex w-[336px] shrink-0 flex-col overflow-hidden border-l-2 border-[#a80000] bg-black">
      <div className="h-[84px] shrink-0">
        <div className="flex h-[44px] items-center pl-[53px] pt-[3px]">
          <span className="text-[28px] leading-none text-[#10d8f0]">泰永长征</span>
          <span className="ml-[6px] text-[19px] font-bold tracking-[1px] text-[#b8b8b8]">002927</span>
        </div>
        <div className="flex h-[36px] items-center pl-[5px] pt-[2px] font-bold leading-none text-[#00e600]">
          <span className="w-[119px] shrink-0 text-[28px]">10.31</span>
          <span className="flex w-[111px] shrink-0 items-center whitespace-nowrap text-[28px]">
            <svg width="22" height="20" viewBox="0 0 22 20" className="shrink-0"><polygon points="1,1 21,1 11,20" fill="#00e600" /></svg>
            -0.30
          </span>
          <span className="text-[28.5px]">-2.83%</span>
        </div>
      </div>
      <div className="shrink-0 border-t border-[#a80000]">
        {sells.map((r) => <QuoteRow key={r[0]} r={r} />)}
      </div>
      <div className="flex h-[2px] shrink-0"><span className="w-[87px] bg-[#a87020]" /><span className="flex-1 bg-[#2870a8]" /></div>
      <div className="h-[138px] shrink-0 pt-[1px]">
        {buys.map((r) => <QuoteRow key={r[0]} r={r} />)}
      </div>
      <div className="h-[146px] shrink-0 border-t-2 border-[#a80000] pt-[1px]">
        {stats.map((r) => <StatRow key={r[0]} r={r} h={28.25} />)}
      </div>
      <div className="h-[93px] shrink-0 border-t-2 border-[#a80000]">
        {stats2.map((r) => <StatRow key={r[0]} r={r} h={28.5} />)}
      </div>
      <div className="h-[120px] shrink-0 border-t-2 border-[#a80000]">
        {flows.map((r) => (
          <div key={r[0]} className="flex h-[28.6px] items-center">
            <span className={LB + " w-[140px] shrink-0 whitespace-nowrap pl-[3px]"}>{r[0]}</span>
            <span className="w-[36px] shrink-0"><span style={{ width: r[1], height: r[6], background: r[2] }} className="block" /></span>
            <span className="flex w-[95px] shrink-0 items-center justify-end"><Num c={r[5]}>{r[3]}</Num>{r[3] !== "0.00" && <Wan c={r[5]} />}</span>
            <span className="ml-auto pr-[2px]"><Num c={r[5]}>{r[4]}</Num></span>
          </div>
        ))}
      </div>
      <div className="flex-1 overflow-hidden border-t-2 border-[#a80000]">
        {trades.map((r, i) => (
          <div key={i} className="flex h-[27.1px] items-center">
            <span className="w-[105px] shrink-0 pl-[3px]"><Num c="#c4c4c4">{r[0]}</Num></span>
            <span className="w-[62px] shrink-0"><Num c="#00e000">{r[1]}</Num></span>
            <span className="flex w-[85px] shrink-0 items-center justify-end"><Num c="#c8c800">{r[2]}</Num><Wan /></span>
            <span className="ml-[13px] w-[20px] shrink-0"><Num c={r[3] === "B" ? "#ff2020" : "#00e000"}>{r[3]}</Num></span>
            <span className="ml-auto pr-[5px]"><Num c="#a8a8a8">{r[4]}</Num></span>
          </div>
        ))}
      </div>
    </div>
  );
}

const B = "#5b8fe8";
const Frame = ({ children }) => (
  <svg width="24" height="24" viewBox="0 0 24 24">
    <rect x="1" y="2" width="22" height="20" fill="#fff" stroke={B} strokeWidth="1.5" />
    {children}
  </svg>
);
const Arrow = ({ rot }) => (
  <svg width="24" height="24" viewBox="0 0 24 24" style={{ transform: `rotate(${rot}deg)` }}>
    <path d="M12 2 L22 12 H16 V22 H8 V12 H2 Z" fill="#fff" stroke={B} strokeWidth="1.4" />
  </svg>
);
const Bars = ({ a, b, c }) => (
  <Frame>
    {[5, 10, 15].map((x, i) => <g key={x}>{[6, 9.5, 13, 16.5].map((y) => <rect key={y} x={x} y={y} width="4" height="2" fill={[a, b, c][i]} />)}</g>)}
  </Frame>
);
const Label = ({ t, c = "#2c66c8", s = "text-[17px]" }) => <span style={{ color: c }} className={s + " leading-none"}>{t}</span>;
const Sep = () => <span className="my-[5px] block h-[2px] w-[30px] shrink-0 bg-[#b4b4b4]" />;
const FText = ({ t }) => <text x="12" y="17" textAnchor="middle" fontSize="12.5" fill="#2c66c8" fontWeight="700">{t}</text>;
const icons = [
  <Arrow rot={-90} />, <Arrow rot={0} />, <Arrow rot={180} />,
  <Frame><rect x="4" y="6" width="6" height="2" fill="#090" /><rect x="4" y="10" width="6" height="2" fill="#090" /><rect x="12" y="6" width="8" height="2" fill="#d22" /><rect x="12" y="10" width="8" height="2" fill="#d22" /><circle cx="16" cy="16" r="4" fill="#ccc" stroke="#777" /></Frame>,
  <Bars a="#d22" b="#090" c="#22c" />,
  <Frame><polyline points="3,16 8,13 11,15 16,9 21,7" fill="none" stroke="#e22" strokeWidth="1.6" /></Frame>,
  <Frame><rect x="5" y="8" width="3" height="8" fill="#e22" /><rect x="11" y="10" width="3" height="8" fill="#090" /><rect x="17" y="5" width="3" height="8" fill="#e22" /><line x1="6.5" x2="6.5" y1="5" y2="19" stroke="#e22" /><line x1="12.5" x2="12.5" y1="6" y2="21" stroke="#090" /><line x1="18.5" x2="18.5" y1="3" y2="16" stroke="#e22" /></Frame>,
  <svg width="24" height="24" viewBox="0 0 24 24"><rect x="6" y="2" width="17" height="16" fill="#fff" stroke={B} /><rect x="1" y="6" width="18" height="16" fill="#fff" stroke={B} /><path d="M4 11H16M4 14.5H16M4 18H16" stroke="#777" strokeWidth="1.6" /></svg>,
  <Frame><FText t="F10" /></Frame>,
  <Frame><rect x="4" y="5" width="6" height="3" fill="#f2c040" /><rect x="12" y="10" width="7" height="3" fill="#f2c040" /><rect x="12" y="15" width="7" height="3" fill="#f2c040" /><path d="M6 8V17H12M6 12H12" fill="none" stroke="#68c" /></Frame>,
  <Frame><rect x="7" y="5" width="10" height="14" fill="#f07830" /><path d="M9 9H15M9 12H15M9 15H15" stroke="#fff" /></Frame>,
  <Frame><FText t="F12" /></Frame>,
  <svg width="24" height="24" viewBox="0 0 24 24"><rect x="1" y="2" width="22" height="20" rx="5" fill="#fff" stroke="#2a8a8a" strokeWidth="1.5" /><text x="12" y="16.5" textAnchor="middle" fontSize="11.5" fontStyle="italic" fill="#224488" fontWeight="700">f(x)</text></svg>,
  <Frame><circle cx="12" cy="12" r="5.5" fill="none" stroke="#3a86d8" strokeWidth="2.4" /></Frame>,
  "sep",
  <Frame><path d="M3 9 L7 7 L11 10 L15 7 L20 9" fill="none" stroke="#e22" strokeWidth="1.5" /><path d="M3 15 L7 13 L11 16 L15 13 L20 15" fill="none" stroke="#44c" strokeWidth="1.5" /></Frame>,
  <span className="text-[16px] font-bold leading-none text-[#4858c8]">RSI</span>,
  <svg width="24" height="28" viewBox="0 0 24 28"><path d="M12 1 L17 7 H7 Z" fill="#d82020" /><text x="12" y="26" textAnchor="middle" fontSize="21" fontWeight="700" fill="#d02020">S</text></svg>,
  <svg width="28" height="28" viewBox="0 0 28 28"><path d="M14 1 L19 7 H16 V12 H21 V9 L27 14 L21 19 V16 H16 V21 H19 L14 27 L9 21 H12 V16 H7 V19 L1 14 L7 9 V12 H12 V7 H9 Z" fill="#1040c0" /></svg>,
  <svg width="28" height="28" viewBox="0 0 28 28"><path d="M3 25 L6 18 L20 3 L25 8 L10 22 Z" fill="#f2b030" stroke="#a87020" /><path d="M20 3 L25 8 L23 10 L18 5 Z" fill="#e87070" /></svg>,
  "sep",
  <Frame><FText t="F5" /></Frame>,
  <Frame><path d="M6 11 A6 6 0 0 1 17 9 M18 13 A6 6 0 0 1 7 15" fill="none" stroke="#44b044" strokeWidth="2.4" /></Frame>,
];
const labels2 = ["1", "5", "15", "30", "60"];
const labels3 = ["周", "月", "N", "多", "季", "年"];

function SideBar() {
  return (
    <div className="flex w-[37px] shrink-0 flex-col items-center bg-[#f0f0f0]">
      {icons.map((ic, i) =>
        ic === "sep" ? <Sep key={i} /> : <div key={i} className="flex h-[34.4px] shrink-0 items-center justify-center">{ic}</div>
      )}
      {labels2.map((t) => <div key={t} className="flex h-[34.5px] shrink-0 items-center justify-center"><Label t={t} /></div>)}
      <div className="flex h-[33px] w-[33px] shrink-0 items-center justify-center border border-[#a8a8a8] bg-white"><Label t="日" s="text-[18px]" /></div>
      {labels3.map((t) => <div key={t} className="flex h-[35px] shrink-0 items-center justify-center"><Label t={t} s="text-[18px]" /></div>)}
    </div>
  );
}

function Status() {
  const it = (w, c, t) => <span key={t} style={{ width: w, color: c }} className="shrink-0 whitespace-nowrap">{t}</span>;
  const g = "#0a8a0a", k = "#151515";
  const amt = (w, n) => (
    <span style={{ width: w }} className="flex shrink-0 items-center font-bold text-[#151515]">{n}<span className="text-[25px] font-normal leading-none text-[#303030]">亿</span></span>
  );
  const name = (w, t) => <span style={{ width: w }} className="shrink-0 text-[24px] font-normal leading-none text-[#303030]">{t}</span>;
  return (
    <div className="flex h-[37px] shrink-0 items-center border-t-2 border-[#a80000] bg-[#f0f0f0] text-[21px] font-semibold">
      <svg width="20" height="24" viewBox="0 0 20 24" className="ml-[3px] shrink-0">
        <rect x="1" y="1" width="18" height="22" rx="2" fill="#f2b040" stroke="#909090" />
        <rect x="4" y="6" width="12" height="10" fill="#fbe0a0" stroke="#c08020" />
      </svg>
      <span className="w-[1px]" />
      {name(54, "上证")}
      {it(95, g, "3088.37")}{it(81, g, "-20.54")}{it(86, g, "-0.66%")}{amt(96, "2856")}
      {name(53, "深证")}
      {it(89, g, "11006.4")}{it(87, g, "-108.02")}{it(87, g, "-0.97%")}{amt(98, "3820")}
      {name(53, "中小")}
      {it(92, g, "7543.56")}{it(83, g, "-87.49")}{it(87, g, "-1.15%")}{amt(97, "517.9")}
      <span className="mr-[4px] h-full w-[2px] bg-[#c0c0c0]" />
      {name(83, "总成交")}
      <span className="shrink-0" style={{ color: k }}>6</span>
    </div>
  );
}

function Watermark() {
  return (
    <div className="absolute bottom-0 right-0 flex h-[81px] w-[800px] items-center bg-[#6e9ed8]">
      <span className="ml-[15px] w-[290px] font-['Noto_Sans_CJK_SC',sans-serif] text-[56px] font-bold leading-none tracking-[0.5px] text-[#10108c]">公式指标网</span>
      <svg width="84" height="80" viewBox="0 0 84 80" className="ml-[15px] shrink-0">
        <path d="M9 48 A34 34 0 0 1 42 6" fill="none" stroke="#d86048" strokeWidth="7" />
        <path d="M42 6 A34 34 0 0 1 76 42" fill="none" stroke="#d86048" strokeWidth="7" />
        <path d="M76 42 A34 34 0 0 1 42 76" fill="none" stroke="#f0c840" strokeWidth="7" />
        <rect x="24" y="14" width="36" height="58" rx="4" fill="#f0c840" />
        <rect x="37" y="2" width="10" height="16" fill="#f0c840" />
        <path d="M30 28 H54 M30 44 H54 M42 22 V70" stroke="#d86048" strokeWidth="2" fill="none" />
      </svg>
      <span className="ml-[12px] whitespace-nowrap pb-[4px] font-['DejaVu_Serif',serif] text-[55px] font-bold leading-none tracking-[-1px] text-white">www.9m8.cn</span>
    </div>
  );
}

function ImeBar() {
  return (
    <div className="absolute left-[1283px] top-[905px] flex h-[23px] w-[156px] items-center border border-[#808080] bg-[#d4d0c8] text-[15px] text-[#202020]">
      <span className="ml-[2px] flex h-[18px] w-[18px] items-center justify-center border border-[#909090] bg-[#f0f0f0] font-bold text-[#c01010]">A</span>
      <span className="ml-[3px] w-[68px] shrink-0">极品五笔</span>
      <span className="ml-[2px] w-[16px] text-center">◗</span>
      <span className="ml-[4px] w-[14px] text-center">‥</span>
      <span className="ml-[4px] h-[14px] w-[20px] border border-[#808080] bg-[#b8b8b8]" />
    </div>
  );
}

export default function App() {
  return (
    <div className="relative flex h-[1395px] w-[2160px] flex-col overflow-hidden bg-black font-['Liberation_Sans','Noto_Sans_CJK_SC',sans-serif]">
      <TopBar />
      <div className="flex h-[1323px] shrink-0">
        <Left />
        <RightPanel />
        <SideBar />
      </div>
      <Status />
      <ImeBar />
      <Watermark />
    </div>
  );
}
